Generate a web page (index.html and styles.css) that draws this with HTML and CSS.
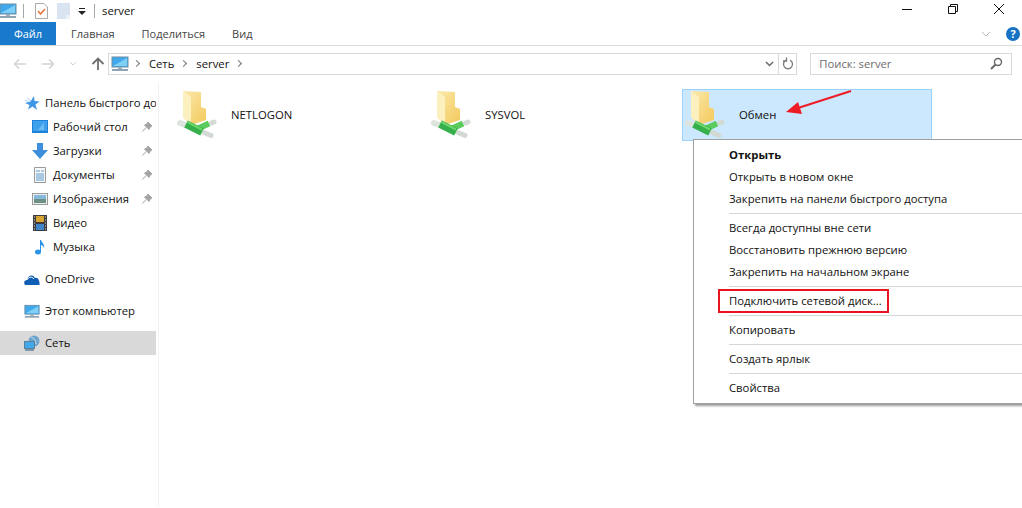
FILE: index.html
```html
<!DOCTYPE html>
<html lang="ru">
<head>
    <meta charset="UTF-8">
    <title>server</title>
    <link rel="stylesheet" href="styles.css">
</head>
<body>
    <svg class="defs" width="0" height="0">
        <defs>
            <linearGradient id="folder-front" x1="0" y1="0" x2="1" y2="1">
                <stop offset="0" stop-color="#fbe9ab"/>
                <stop offset="1" stop-color="#f3c95c"/>
            </linearGradient>
        </defs>
        <symbol id="share" viewBox="0 0 48 50">
            <path d="M8 2 L26 3 V18 L31 20 V31 L16 36 L8 28 Z" fill="url(#folder-front)"/>
            <path d="M8 2 L16 8 V36 L8 28 Z" fill="#fdf0bf"/>
            <path d="M5 34 L9 35.500" stroke="#dde4dd" stroke-width="6" stroke-linecap="round"/>
            <path d="M29 43.500 L36 46.500" stroke="#d3dad3" stroke-width="5" stroke-linecap="round"/>
            <path d="M36.500 34 L39 33" stroke="#d3dad3" stroke-width="5" stroke-linecap="round"/>
            <path d="M22 40 L34 34.500" stroke="#5ccb5e" stroke-width="6"/>
            <path d="M11 35 L27 43" stroke="#36b04a" stroke-width="8"/>
            <path d="M12.500 33 L27 40.500" stroke="#6bd56b" stroke-width="2"/>
        </symbol>
        <symbol id="pin" viewBox="0 0 12 12">
            <path d="M7 1 L11 5 L9 6 L8 8.500 L3.500 4 L6 3 Z M5 6.500 L1.500 10.500" fill="#a3a3a3" stroke="#a3a3a3"/>
        </symbol>
        <symbol id="monitor" viewBox="0 0 18 16">
            <rect x="1" y="1" width="16" height="10" fill="#3fa9ec" stroke="#6d8ea3"/>
            <path d="M2 10 L16 2 V10 Z" fill="#7fd0f7"/>
            <rect x="7" y="11" width="4" height="2" fill="#9db0bc"/>
            <rect x="1" y="13" width="16" height="2" fill="#8fa3b0"/>
        </symbol>
    </svg>

    <header class="titlebar">
        <svg class="qa-icon qa-monitor" width="18" height="16"><use href="#monitor"/></svg>
        <span class="qa-sep"></span>
        <svg class="qa-icon qa-check" width="13" height="16" viewBox="0 0 13 16">
            <path d="M.5.500 H9 L12.500 4 V15.500 H.5 Z" fill="#fff" stroke="#a9a9a9"/>
            <path d="M3 8 L5.500 11 L10 6" fill="none" stroke="#e8743b" stroke-width="1.500"/>
        </svg>
        <svg class="qa-icon qa-blank" width="13" height="16" viewBox="0 0 13 16">
            <rect width="13" height="16" fill="#d9e3f1"/>
            <path d="M9 12 H13 V16 H9 Z" fill="#eef3fa"/>
        </svg>
        <svg class="qa-icon qa-drop" width="8" height="7" viewBox="0 0 8 7">
            <path d="M1 0 H7 V1 H1 Z M0 3 H8 L4 7 Z" fill="#222"/>
        </svg>
        <span class="qa-sep qa-sep-2"></span>
        <span class="title">server</span>
        <div class="window-btns">
            <svg width="12" height="12" viewBox="0 0 12 12"><path d="M1 6.500 H11" stroke="#111"/></svg>
            <svg width="12" height="12" viewBox="0 0 12 12"><path d="M1.500 3.500 H8.500 V10.500 H1.500 Z M3.500 3 V1.500 H10.500 V8.500 H9" fill="none" stroke="#111"/></svg>
            <svg width="12" height="12" viewBox="0 0 12 12"><path d="M1 1 L11 11 M11 1 L1 11" stroke="#111"/></svg>
        </div>
    </header>

    <nav class="tabs">
        <a class="tab tab-file">Файл</a>
        <a class="tab tab-home">Главная</a>
        <a class="tab tab-share">Поделиться</a>
        <a class="tab tab-view">Вид</a>
        <svg class="ribbon-chevron" width="10" height="6" viewBox="0 0 10 6"><path d="M1 1 L5 5 L9 1" fill="none" stroke="#b5b5b5"/></svg>
        <span class="help">?</span>
    </nav>

    <div class="addressbar">
        <div class="nav-btns">
            <svg width="14" height="12" viewBox="0 0 14 12"><path d="M13 6 H2 M6 1.500 L1.500 6 L6 10.500" fill="none" stroke="#d2d2d2" stroke-width="1.500"/></svg>
            <svg width="14" height="12" viewBox="0 0 14 12"><path d="M1 6 H12 M8 1.500 L12.500 6 L8 10.500" fill="none" stroke="#d2d2d2" stroke-width="1.500"/></svg>
            <svg width="8" height="5" viewBox="0 0 8 5"><path d="M1 1 L4 4 L7 1" fill="none" stroke="#d2d2d2"/></svg>
            <svg width="14" height="14" viewBox="0 0 14 14"><path d="M7 13 V2 M1.500 7 L7 1.500 L12.500 7" fill="none" stroke="#6f6f6f" stroke-width="1.800"/></svg>
        </div>
        <div class="path-box">
            <svg class="path-icon" width="18" height="16"><use href="#monitor"/></svg>
            <span class="crumb-arrow"></span>
            <span class="crumb">Сеть</span>
            <span class="crumb-arrow"></span>
            <span class="crumb">server</span>
            <span class="crumb-arrow"></span>
            <div class="path-tools">
                <span class="path-tool">
                    <svg width="9" height="6" viewBox="0 0 9 6"><path d="M1 1 L4.500 4.500 L8 1" fill="none" stroke="#6a6a6a" stroke-width="1.500"/></svg>
                </span>
                <span class="path-tool path-refresh">
                    <svg width="12" height="13" viewBox="0 0 12 13"><path d="M4 3.200 A4.500 4.500 0 1 0 8 3.200 M4.500 .5 V4 H1" fill="none" stroke="#7b7b7b" stroke-width="1.300"/></svg>
                </span>
            </div>
        </div>
        <div class="search-box">
            <span>Поиск: server</span>
            <svg width="13" height="13" viewBox="0 0 13 13"><circle cx="8" cy="5" r="3.500" fill="none" stroke="#666" stroke-width="1.400"/><path d="M5.500 7.500 L1 12" stroke="#666" stroke-width="2"/></svg>
        </div>
    </div>

    <div class="main">
        <aside class="sidebar">
            <ul class="nav-group">
                <li class="nav-item nav-top">
                    <svg class="nav-icon" width="16" height="16" viewBox="0 0 16 16"><path d="M10 1 L10.500 6 L15.500 6.500 L11.500 9.500 L13 15 L8.500 11.500 L4 14.500 L5.500 10 L1 8 L6.500 6.500 Z" fill="#3f97e6"/><path d="M3 3 L7 6 M1 5 L5 7" stroke="#a9d2f3"/></svg>
                    <span class="nav-label">Панель быстрого до</span>
                </li>
                <li class="nav-item nav-sub">
                    <svg class="nav-icon" width="16" height="14" viewBox="0 0 16 14"><rect width="16" height="13" fill="#1a82d8"/><rect x="1" y="1" width="14" height="10" fill="#3fa1ec"/><path d="M6 10 L12 3 V10 Z" fill="#6cbcf2"/></svg>
                    <span class="nav-label">Рабочий стол</span>
                    <svg class="nav-pin" width="12" height="12"><use href="#pin"/></svg>
                </li>
                <li class="nav-item nav-sub">
                    <svg class="nav-icon" width="16" height="16" viewBox="0 0 16 16"><path d="M5 0 H11 V7 H16 L8 16 L0 7 H5 Z" fill="#3b8fdc"/></svg>
                    <span class="nav-label">Загрузки</span>
                    <svg class="nav-pin" width="12" height="12"><use href="#pin"/></svg>
                </li>
                <li class="nav-item nav-sub">
                    <svg class="nav-icon" width="16" height="16" viewBox="0 0 16 16"><path d="M2.500 .5 H13.500 V15.500 H2.500 Z" fill="#f7f7f7" stroke="#9a9a9a"/><path d="M4 4 H8 M9 4 H12 M4 7 H12 M4 9 H12 M4 11 H12 M4 13 H12" stroke="#5d9bd0"/></svg>
                    <span class="nav-label">Документы</span>
                    <svg class="nav-pin" width="12" height="12"><use href="#pin"/></svg>
                </li>
                <li class="nav-item nav-sub">
                    <svg class="nav-icon" width="16" height="12" viewBox="0 0 16 12"><rect x=".5" y=".5" width="15" height="11" fill="#eee" stroke="#9a9a9a"/><rect x="2" y="2" width="12" height="4" fill="#86b8dd"/><rect x="2" y="6" width="12" height="4" fill="#6d8f86"/></svg>
                    <span class="nav-label">Изображения</span>
                    <svg class="nav-pin" width="12" height="12"><use href="#pin"/></svg>
                </li>
                <li class="nav-item nav-sub">
                    <svg class="nav-icon" width="16" height="16" viewBox="0 0 16 16"><rect x="1" width="14" height="16" fill="#3d3d3d"/><rect x="4" y="1" width="8" height="6" fill="#d9a531"/><rect x="4" y="9" width="8" height="6" fill="#3f86c9"/><path d="M2 2 H3 M2 5 H3 M2 8 H3 M2 11 H3 M2 14 H3 M13 2 H14 M13 5 H14 M13 8 H14 M13 11 H14 M13 14 H14" stroke="#ddd"/></svg>
                    <span class="nav-label">Видео</span>
                </li>
                <li class="nav-item nav-sub">
                    <svg class="nav-icon" width="16" height="16" viewBox="0 0 16 16"><ellipse cx="6" cy="13" rx="3" ry="2.500" fill="#2a93e8"/><path d="M8 13 V1 L9 1 C10 4 13 5 12 9 C11.500 7 10 6 9 6 V13 Z" fill="#2a93e8"/></svg>
                    <span class="nav-label">Музыка</span>
                </li>
            </ul>
            <ul class="nav-group">
                <li class="nav-item nav-top">
                    <svg class="nav-icon" width="16" height="11" viewBox="0 0 16 11"><path d="M1 11 C-1 8 1 6 3 6 C4 1 9 0 11 4 C14 3 16 7 15.500 11 Z" fill="#0f5db5"/><path d="M3 6 C4 3 8 2 10 5" fill="none" stroke="#fff"/></svg>
                    <span class="nav-label">OneDrive</span>
                </li>
            </ul>
            <ul class="nav-group">
                <li class="nav-item nav-top">
                    <svg class="nav-icon" width="16" height="15" viewBox="0 0 18 16"><use href="#monitor"/></svg>
                    <span class="nav-label">Этот компьютер</span>
                </li>
            </ul>
            <ul class="nav-group">
                <li class="nav-item nav-top nav-active">
                    <svg class="nav-icon" width="16" height="16" viewBox="0 0 16 16"><circle cx="10" cy="6" r="5.500" fill="#6fa4cf"/><path d="M7 2 C10 3 12 5 12 9" fill="none" stroke="#c9dff0"/><rect x=".5" y="6.500" width="10" height="7" fill="#3fa9ec" stroke="#5d7f96"/><rect x="1" y="14" width="9" height="2" fill="#7e98aa"/></svg>
                    <span class="nav-label">Сеть</span>
                </li>
            </ul>
        </aside>

        <section class="content">
            <div class="tile">
                <svg class="tile-icon" width="48" height="50"><use href="#share"/></svg>
                <span class="tile-name">NETLOGON</span>
            </div>
            <div class="tile">
                <svg class="tile-icon" width="48" height="50"><use href="#share"/></svg>
                <span class="tile-name">SYSVOL</span>
            </div>
            <div class="tile tile-selected">
                <svg class="tile-icon" width="48" height="50"><use href="#share"/></svg>
                <span class="tile-name">Обмен</span>
                <svg class="arrow" width="70" height="26" viewBox="0 0 70 26">
                    <path d="M67 1 L14 18" stroke="#ee1c25" stroke-width="2"/>
                    <path d="M2 22 L14 12 L18 24 Z" fill="#ee1c25"/>
                </svg>
            </div>
        </section>
    </div>

    <ul class="context-menu">
        <li class="menu-item menu-default">Открыть</li>
        <li class="menu-item">Открыть в новом окне</li>
        <li class="menu-item">Закрепить на панели быстрого доступа</li>
        <li class="menu-sep"></li>
        <li class="menu-item">Всегда доступны вне сети</li>
        <li class="menu-item">Восстановить прежнюю версию</li>
        <li class="menu-item">Закрепить на начальном экране</li>
        <li class="menu-sep"></li>
        <li class="menu-item menu-marked">Подключить сетевой диск...</li>
        <li class="menu-sep"></li>
        <li class="menu-item">Копировать</li>
        <li class="menu-sep"></li>
        <li class="menu-item">Создать ярлык</li>
        <li class="menu-sep"></li>
        <li class="menu-item">Свойства</li>
    </ul>
</body>
</html>
```

FILE: styles.css
```css
* {
    box-sizing: border-box;
}
html, body {
    height: 100%;
}
body {
    margin: 0;
    background-color: #fff;
    color: #111;
    font-family: "Open Sans", "Noto Sans", sans-serif;
    font-size: 11.3px;
    overflow: hidden;
}
ul {
    list-style: none;
    margin: 0;
    padding: 0;
}
svg {
    display: block;
    flex: none;
}
.defs {
    position: absolute;
}

/* Title bar */
.titlebar {
    display: flex;
    align-items: center;
    height: 22px;
}
.qa-monitor {
    margin-left: -1px;
}
.qa-sep {
    width: 1px;
    height: 14px;
    margin-left: 6px;
    background-color: #a8a8a8;
}
.qa-check {
    margin-left: 11px;
}
.qa-blank {
    margin-left: 9px;
}
.qa-drop {
    margin-left: 8px;
}
.qa-sep-2 {
    margin-left: 8px;
}
.title {
    margin-left: 7px;
    margin-top: -2px;
}
.window-btns {
    display: flex;
    gap: 34px;
    margin-left: auto;
    margin-right: 17px;
    margin-top: -4px;
}

/* Ribbon tabs */
.tabs {
    display: flex;
    align-items: center;
    height: 24px;
    border-bottom: 1px solid #dadbdc;
    color: #444;
    font-size: 11px;
}
.tab-file {
    display: flex;
    align-items: center;
    justify-content: center;
    width: 56px;
    height: 23px;
    background-color: #1979ca;
    color: #fff;
}
.tab-home {
    margin-left: 15px;
}
.tab-share {
    margin-left: 27px;
}
.tab-view {
    margin-left: 27px;
}
.ribbon-chevron {
    margin-left: auto;
}
.help {
    display: flex;
    align-items: center;
    justify-content: center;
    width: 14px;
    height: 14px;
    margin: 0 2px 0 15px;
    border-radius: 50%;
    background-color: #1672c4;
    color: #fff;
    font-weight: bold;
}

/* Address row */
.addressbar {
    display: flex;
    align-items: center;
    height: 37px;
    padding: 0 10px 2px 0;
}
.nav-btns {
    display: flex;
    align-items: center;
    gap: 14px;
    width: 108px;
    padding-left: 13px;
}
.path-box {
    display: flex;
    align-items: center;
    width: 690px;
    height: 22px;
    border: 1px solid #d9d9d9;
}
.path-icon {
    margin-left: 2px;
}
.crumb-arrow {
    width: 5px;
    height: 5px;
    margin: 0 10px 0 5px;
    border-top: 1.5px solid #777;
    border-right: 1.5px solid #777;
    transform: rotate(45deg);
}
.crumb {
    margin-right: 2px;
}
.path-tools {
    display: flex;
    height: 100%;
    margin-left: auto;
}
.path-tool {
    display: flex;
    align-items: center;
    justify-content: center;
    width: 18px;
}
.path-refresh {
    border-left: 1px solid #d9d9d9;
}
.search-box {
    display: flex;
    align-items: center;
    justify-content: space-between;
    width: 202px;
    height: 22px;
    margin-left: 13px;
    padding: 0 8px;
    border: 1px solid #d9d9d9;
    color: #6d6d6d;
}

/* Navigation pane */
.main {
    display: flex;
    height: 424px;
}
.sidebar {
    width: 159px;
    padding: 8px 2px 0 0;
    border-right: 1px solid #f2f2f2;
}
.nav-group {
    margin-bottom: 8px;
}
.nav-item {
    display: flex;
    align-items: center;
    height: 24px;
    white-space: nowrap;
    overflow: hidden;
    color: #111;
}
.nav-top {
    padding-left: 24px;
}
.nav-sub {
    padding-left: 32px;
}
.nav-icon {
    width: 16px;
    margin-right: 5px;
}
.nav-label {
    margin-top: -2px;
}
.nav-pin {
    margin-left: auto;
    margin-right: 3px;
}
.nav-active {
    background-color: #d9d9d9;
}

/* Shares */
.content {
    display: flex;
    gap: 4px;
    align-items: flex-start;
    padding: 6px 0 0 15px;
}
.tile {
    display: flex;
    align-items: center;
    position: relative;
    width: 250px;
    height: 52px;
    border: 1px solid transparent;
    padding-bottom: 2px;
}
.tile-name {
    margin-left: 8px;
    color: #111;
}
.tile-selected {
    background-color: #cce8ff;
    border-color: #99d1ff;
}
.arrow {
    position: absolute;
    left: 101px;
    top: 0;
}

/* Context menu */
.context-menu {
    position: absolute;
    left: 693px;
    top: 139px;
    width: 340px;
    height: 265px;
    padding: 4px 2px;
    background-color: #fff;
    border: 1px solid #a0a0a0;
    box-shadow: 2px 2px 2px rgba(0, 0, 0, 0.4);
}
.menu-item {
    display: flex;
    align-items: center;
    position: relative;
    height: 22px;
    padding: 0 0 2px 33px;
    color: #111;
}
.menu-default {
    font-weight: bold;
}
.menu-sep {
    height: 1px;
    margin: 3px 0 3px 33px;
    background-color: #d7d7d7;
}
.menu-marked::after {
    content: "";
    position: absolute;
    left: 22px;
    top: -1px;
    box-sizing: border-box;
    width: 171px;
    height: 24px;
    border: 2px solid #e8141f;
}
```
